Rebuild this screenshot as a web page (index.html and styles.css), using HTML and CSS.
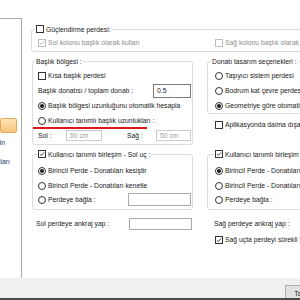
FILE: index.html
```html
<!DOCTYPE html>
<html lang="tr">
<head>
  <meta charset="UTF-8" />
  <title>Perde ayarları</title>
  <link rel="stylesheet" href="styles.css">
</head>
<body>
  <div class="window">
    <div class="main">

      <!-- sol liste (yatay kaydırılmış) -->
      <aside class="side">
        <div class="list">
          <div class="item sel"></div>
          <div class="item t1"><span>Kolon başlık perdesin</span></div>
          <div class="item t2"><span>Perde donatıları</span></div>
        </div>
      </aside>

      <section class="content">
        <fieldset class="grp grp-top">
          <legend class="lg lg-top"><span class="cb"></span>Güçlendirme perdesi:</legend>
          <div class="cols">
            <label class="row dis"><span class="cb dis"><svg viewBox="0 0 8 8"><path d="M1.2 4.2 L3.2 6 L6.8 1.8" /></svg></span>Sol kolonu başlık olarak kullan</label>
            <label class="row dis"><span class="cb dis"></span>Sağ kolonu başlık olarak kullan</label>
          </div>
        </fieldset>

        <div class="grid">
          <fieldset class="grp left g-baslik">
            <legend class="lg lg-text">Başlık bölgesi :</legend>
            <label class="row"><span class="cb"></span>Kısa başlık perdesi</label>
            <div class="row between">Başlık donatısı / toplam donatı :<span class="inp inp-val">0.5</span></div>
            <label class="row"><span class="rb on"></span>Başlık bölgesi uzunluğunu otomatik hesapla</label>
            <label class="row marked"><span class="rb"></span>Kullanıcı tanımlı başlık uzunlukları :</label>
            <div class="row row-len">
              <span class="lbl-sol">Sol :</span><span class="inp inp-dis">50 cm</span>
              <span class="lbl-sag">Sağ :</span><span class="inp inp-dis inp-sag">50 cm</span>
            </div>
          </fieldset>

          <div class="rcol">
            <fieldset class="grp right g-donati">
              <legend class="lg lg-text">Donatı tasarım seçenekleri :</legend>
              <label class="row"><span class="rb"></span>Taşıyıcı sistem perdesi</label>
              <label class="row"><span class="rb"></span>Bodrum kat çevre perdesi</label>
              <label class="row"><span class="rb on"></span>Geometriye göre otomatik</label>
            </fieldset>
            <label class="row apl"><span class="cb"></span>Aplikasyonda daima dışarıda</label>
          </div>

          <fieldset class="grp left g-uc">
            <legend class="lg lg-cb"><span class="cb"><svg viewBox="0 0 8 8"><path d="M1.2 4.2 L3.2 6 L6.8 1.8" /></svg></span>Kullanıcı tanımlı birleşim - Sol uç :</legend>
            <label class="row"><span class="rb on"></span>Birincil Perde - Donatıları kesiştir</label>
            <label class="row"><span class="rb"></span>Birincil Perde - Donatıları kenetle</label>
            <div class="row row-short between"><span><span class="rb"></span>Perdeye bağla :</span><span class="inp inp-box"></span></div>
          </fieldset>

          <fieldset class="grp right g-uc">
            <legend class="lg lg-cb"><span class="cb"><svg viewBox="0 0 8 8"><path d="M1.2 4.2 L3.2 6 L6.8 1.8" /></svg></span>Kullanıcı tanımlı birleşim - Sağ uç :</legend>
            <label class="row"><span class="rb on"></span>Birincil Perde - Donatıları kesiştir</label>
            <label class="row"><span class="rb"></span>Birincil Perde - Donatıları kenetle</label>
            <div class="row row-short"><span class="rb"></span>Perdeye bağla :</div>
          </fieldset>

          <div class="ankraj-sol row between">Sol perdeye ankraj yap :<span class="inp inp-box inp-ank"></span></div>
          <div class="ankraj-sag">
            <div class="row row-short">Sağ perdeye ankraj yap :</div>
            <label class="row sure"><span class="cb"><svg viewBox="0 0 8 8"><path d="M1.2 4.2 L3.2 6 L6.8 1.8" /></svg></span>Sağ uçta perdeyi sürekli kullan</label>
          </div>
        </div>
      </section>
    </div>

    <footer class="foot">
      <button class="btn">Tamam</button>
    </footer>
  </div>
</body>
</html>
```

FILE: styles.css
```css
/* Temel sıfırlama */
* {
  margin: 0;
  padding: 0;
  box-sizing: border-box;
}

body {
  width: 300px;
  height: 300px;
  overflow: hidden;
  background: #fff;
  color: #1a1a1a;
  font-family: "Liberation Sans", Arial, sans-serif;
  font-size: 6.8px;
}

.window {
  display: flex;
  flex-direction: column;
  height: 300px;
}

.main {
  display: flex;
  height: 278px;
}

/* Sol ağaç listesi */
.side {
  flex: none;
  width: 22px;
  padding-top: 18px;
}

.list {
  height: 100%;
  border-top: 1px solid #a9a9a9;
  border-right: 1px solid #a9a9a9;
  padding-top: 99px;
  overflow: hidden;
}

.item {
  display: flex;
  justify-content: flex-end;
  align-items: center;
  height: 19px;
  white-space: nowrap;
  color: #1c2f5e;
}

.item.sel {
  width: 17px;
  height: 15px;
  background: linear-gradient(#fde4b6, #f8c37d);
  border: 1px solid #e3aa5c;
  border-radius: 2px;
}
.item.t1 { padding-right: 16px; }
.item.t2 { padding-right: 11px; }

/* Ana içerik */
.content {
  flex: 1;
  position: relative;
  overflow: hidden;
  padding: 24px 0 0 10px;
}

fieldset.grp {
  border: 1px solid #dcdcdc;
  border-radius: 3px;
  min-width: 0;
}

.lg {
  display: flex;
  align-items: center;
  gap: 2px;
  height: 10px;
  padding: 0 1px;
  white-space: nowrap;
}

.grp-top {
  width: 290px;
  margin-left: -1px;
  padding: 1px 0 1px 6px;
}
.lg-top { margin-left: -3px; }

.cols {
  display: grid;
  grid-template-columns: 177px 1fr;
}

.row {
  display: flex;
  align-items: center;
  gap: 2px;
  height: 15px;
  white-space: nowrap;
}
.row.between { justify-content: space-between; }
.row-short { height: 13px; }
.row-short > span:first-child {
  display: flex;
  align-items: center;
  gap: 2px;
}

.dis { color: #8d8d8d; }

/* İşaret kutusu ve seçenek düğmesi */
.cb {
  flex: none;
  display: flex;
  align-items: center;
  justify-content: center;
  width: 8px;
  height: 8px;
  border: 1px solid #333;
  background: #fff;
}
.cb.dis { border-color: #bcbcbc; }
.cb svg {
  width: 8px;
  height: 8px;
  fill: none;
  stroke: #222;
  stroke-width: 1.1;
}
.cb.dis svg { stroke: #a8a8a8; }

.rb {
  flex: none;
  display: flex;
  align-items: center;
  justify-content: center;
  width: 8px;
  height: 8px;
  border: 1px solid #333;
  border-radius: 50%;
  background: #fff;
}
.rb.on::after {
  content: "";
  width: 4px;
  height: 4px;
  border-radius: 50%;
  background: #1a1a1a;
}

/* Metin kutuları */
.inp {
  display: inline-block;
  flex: none;
  height: 14px;
  line-height: 12px;
  padding-left: 3px;
  border: 1px solid #7a7a7a;
  background: #fff;
}
.inp-val { width: 38px; }
.inp-dis {
  width: 36px;
  height: 11px;
  line-height: 9px;
  border-color: #cccccc;
  color: #a0a0a0;
}
.inp-sag { width: 35px; }
.inp-box {
  width: 63px;
  height: 13px;
  border-color: #acacac;
}
.inp-ank { height: 12px; }

/* Izgara */
.grid {
  display: grid;
  grid-template-columns: 161px 130px;
  column-gap: 14px;
  margin-top: 4px;
}

.left { padding: 2px 1px 2px 5px; }
.right { padding: 2px 0 0 7px; }

.lg-text { margin-left: -3px; }
.g-donati .lg-text { margin-left: -4px; }
.lg-cb { margin-left: -1px; }

.g-uc {
  margin-top: 4px;
  padding-top: 4px;
  padding-bottom: 3px;
}

.row-len { height: 14px; gap: 0; }
.lbl-sol { width: 28px; }
.lbl-sag { width: 29px; margin-left: 25px; }

/* kırmızı işaret çizgisi */
.marked { position: relative; }
.marked::after {
  content: "";
  position: absolute;
  left: -5px;
  bottom: -1px;
  width: 114px;
  height: 2px;
  background: #e3141c;
}

.apl {
  margin-top: 3px;
  padding-left: 8px;
}

.ankraj-sol {
  height: 13px;
  margin-top: 7px;
  padding: 0 1px 0 4px;
}

.ankraj-sag {
  margin-top: 7px;
  padding-left: 7px;
}
.sure {
  margin-top: 2px;
  padding-left: 1px;
}

/* Alt çubuk */
.foot {
  flex: none;
  display: flex;
  height: 22px;
  padding: 7px 0 0 285px;
  background: #f0f0f0;
  border-bottom: 2px solid #4a4a4a;
  overflow: hidden;
}

.btn {
  flex: none;
  width: 41px;
  height: 16px;
  font: inherit;
  color: #1a1a1a;
  background: #e1e1e1;
  border: 1px solid #adadad;
}
```
